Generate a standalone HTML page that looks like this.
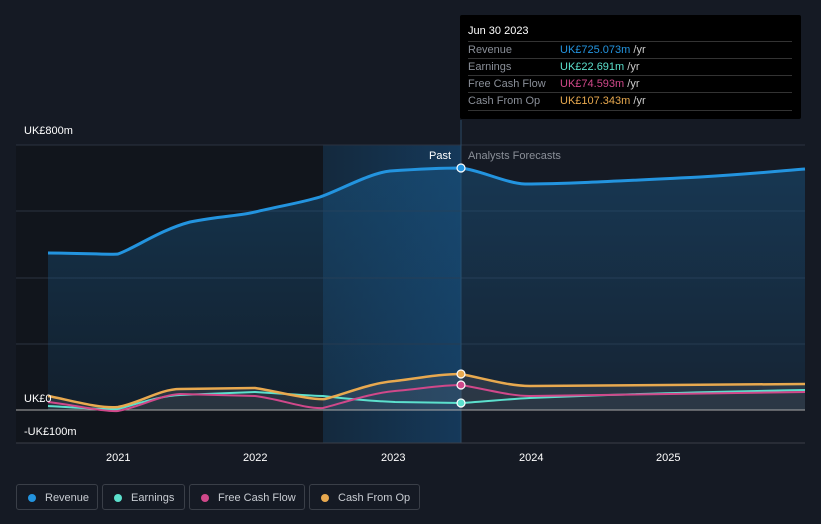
<!DOCTYPE html>
<html><head><meta charset="utf-8"><style>
body{margin:0;width:821px;height:524px;background:#151a24;font-family:"Liberation Sans",sans-serif;overflow:hidden;position:relative}
.t{position:absolute;font-size:11px;color:#fff}
.tip{position:absolute;left:460px;top:15px;width:341px;height:104px;background:#000;border-radius:2px}
.tip .h{position:absolute;left:8px;top:10px;font-size:11px;color:#fff}
.row{position:absolute;left:8px;width:324px;border-top:1px solid #333;height:17px;font-size:11px;line-height:17px;color:#8a8f98}
.row span{position:absolute;left:92px}
.leg{position:absolute;top:484px;height:26px;border:1px solid #3a3f48;border-radius:3px;font-size:11px;color:#c8ccd2;line-height:26px;box-sizing:border-box}
.leg i{position:absolute;left:11px;top:9px;width:8px;height:8px;border-radius:50%}
</style></head><body>
<svg width="821" height="524" style="position:absolute;left:0;top:0">
<defs>
<linearGradient id="pg" x1="0" x2="1"><stop offset="0" stop-color="#14293d"/><stop offset="1" stop-color="#15395a"/></linearGradient>
<linearGradient id="rf" x1="0" y1="0" x2="0" y2="1"><stop offset="0" stop-color="#1a5a8a" stop-opacity=".45"/><stop offset="1" stop-color="#1a5a8a" stop-opacity=".15"/></linearGradient>
</defs>
<rect x="16" y="145" width="307" height="298" fill="#11151c"/>
<rect x="323" y="145" width="138" height="298" fill="url(#pg)"/>
<g stroke="#2a3240" stroke-width="1">
<line x1="16" y1="145" x2="805" y2="145"/><line x1="16" y1="211" x2="805" y2="211"/><line x1="16" y1="278" x2="805" y2="278"/><line x1="16" y1="344" x2="805" y2="344"/>
</g>
<line x1="461" y1="120" x2="461" y2="443" stroke="#2a4a66"/>
<path d="M48,253 C80,253 110,255 118,254 C135,248 160,230 190,222 C220,216 240,216 255,212 C280,206 300,203 320,197 C340,190 370,173 390,171 C420,169 440,168 461,168 C480,170 505,183 525,184 C560,184 600,182 700,177 C750,174 780,171 805,169 L805,410 L48,410 Z" fill="url(#rf)"/>
<path d="M48,396 C70,400 100,409 118,407 C140,403 160,389 180,389 L255,388 C280,392 310,400 325,399 C345,394 370,383 395,381 C420,378 440,374 461,374 C490,380 510,386 530,386 L805,384 L805,410 L48,410Z" fill="#6b6f78" fill-opacity=".25"/>
<line x1="16" y1="410" x2="805" y2="410" stroke="#aaa" stroke-width="1"/>
<line x1="16" y1="443" x2="805" y2="443" stroke="#3a3f48"/>
<path d="M48,253 C80,253 110,255 118,254 C135,248 160,230 190,222 C220,216 240,216 255,212 C280,206 300,203 320,197 C340,190 370,173 390,171 C420,169 440,168 461,168 C480,170 505,183 525,184 C560,184 600,182 700,177 C750,174 780,171 805,169" fill="none" stroke="#2394df" stroke-width="3"/>
<path d="M48,406 C80,408 110,410 118,409 C140,403 160,396 180,395 L255,392 C290,394 310,396 323,396 C340,398 370,401 395,402 L461,403 C490,401 510,399 530,398 C600,395 700,392 805,390" fill="none" stroke="#5ce0cd" stroke-width="2"/>
<path d="M48,402 C80,406 105,412 118,411 C140,407 160,395 180,394 L255,396 C280,399 305,409 323,408 C340,404 370,393 395,391 C420,389 440,385 461,385 C490,390 510,396 530,396 L805,392" fill="none" stroke="#d0488a" stroke-width="2"/>
<path d="M48,396 C70,400 100,409 118,407 C140,403 160,389 180,389 L255,388 C280,392 310,400 325,399 C345,394 370,383 395,381 C420,378 440,374 461,374 C490,380 510,386 530,386 L805,384" fill="none" stroke="#e8a94f" stroke-width="2.5"/>
<circle cx="461" cy="168" r="4" fill="#2394df" stroke="#fff" stroke-width="1.2"/>
<circle cx="461" cy="374" r="4" fill="#e8a94f" stroke="#fff" stroke-width="1.2"/>
<circle cx="461" cy="385" r="4" fill="#d0488a" stroke="#fff" stroke-width="1.2"/>
<circle cx="461" cy="403" r="4" fill="#5ce0cd" stroke="#fff" stroke-width="1.2"/>
</svg>
<div class="t" style="left:24px;top:125px">UK£800m</div>
<div class="t" style="left:24px;top:393px">UK£0</div>
<div class="t" style="left:24px;top:426px">-UK£100m</div>
<div class="t" style="left:429px;top:150px">Past</div>
<div class="t" style="left:468px;top:150px;color:#8a8f98">Analysts Forecasts</div>
<div class="t" style="left:106px;top:452px">2021</div>
<div class="t" style="left:243px;top:452px">2022</div>
<div class="t" style="left:381px;top:452px">2023</div>
<div class="t" style="left:519px;top:452px">2024</div>
<div class="t" style="left:656px;top:452px">2025</div>
<div class="tip"><div class="h">Jun 30 2023</div>
<div class="row" style="top:26px">Revenue<span style="color:#2394df">UK£725.073m <b style="font-weight:normal;color:#ccc">/yr</b></span></div>
<div class="row" style="top:43px">Earnings<span style="color:#5ce0cd">UK£22.691m <b style="font-weight:normal;color:#ccc">/yr</b></span></div>
<div class="row" style="top:60px">Free Cash Flow<span style="color:#d0488a">UK£74.593m <b style="font-weight:normal;color:#ccc">/yr</b></span></div>
<div class="row" style="top:77px;border-bottom:1px solid #333">Cash From Op<span style="color:#e8a94f">UK£107.343m <b style="font-weight:normal;color:#ccc">/yr</b></span></div>
</div>
<div class="leg" style="left:16px;width:82px"><i style="background:#2394df"></i><span style="position:absolute;left:28px">Revenue</span></div>
<div class="leg" style="left:102px;width:83px"><i style="background:#5ce0cd"></i><span style="position:absolute;left:28px">Earnings</span></div>
<div class="leg" style="left:189px;width:116px"><i style="background:#d0488a"></i><span style="position:absolute;left:28px">Free Cash Flow</span></div>
<div class="leg" style="left:309px;width:111px"><i style="background:#e8a94f"></i><span style="position:absolute;left:28px">Cash From Op</span></div>
</body></html>
